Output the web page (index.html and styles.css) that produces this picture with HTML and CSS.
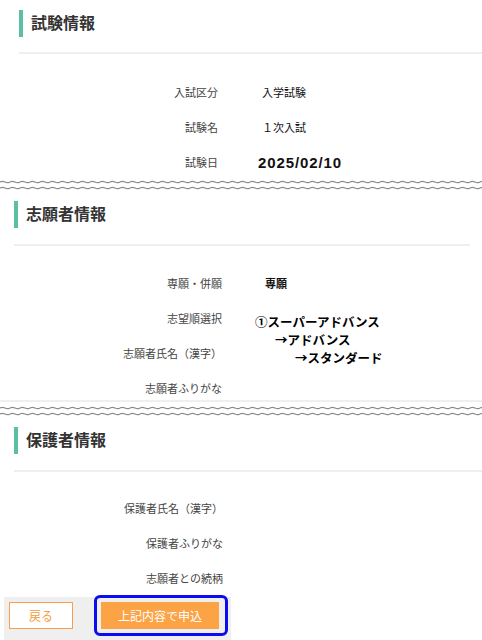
FILE: index.html
```html
<!DOCTYPE html>
<html lang="ja">
<head>
<meta charset="utf-8">
<title>申込内容確認</title>
<link rel="stylesheet" href="styles.css">
</head>
<body>
<main class="page">
  <section class="sec sec-exam">
    <h2 class="sec-head">試験情報</h2>
    <div class="sec-rule"></div>
    <dl class="rows">
      <div class="row"><dt class="lbl">入試区分</dt><dd class="val">入学試験</dd></div>
      <div class="row"><dt class="lbl">試験名</dt><dd class="val">１次入試</dd></div>
      <div class="row"><dt class="lbl">試験日</dt><dd class="val val-date">2025/02/10</dd></div>
    </dl>
  </section>

  <div class="wave"><svg class="wave-svg" width="100%" height="12"><defs><pattern id="w1" width="10" height="12" patternUnits="userSpaceOnUse"><path d="M0 2 Q2.5 0.6 5 2 T10 2 M0 8 Q2.5 6.6 5 8 T10 8" fill="none" stroke="#8c8c8c" stroke-width="1.2"/></pattern></defs><rect width="100%" height="12" fill="url(#w1)"/></svg></div>

  <section class="sec sec-applicant">
    <h2 class="sec-head">志願者情報</h2>
    <div class="sec-rule sec-rule-short"></div>
    <dl class="rows">
      <div class="row"><dt class="lbl">専願・併願</dt><dd class="val val-bold">専願</dd></div>
      <div class="row"><dt class="lbl">志望順選択</dt><dd class="val val-multi"><span class="ml-line">①スーパーアドバンス</span><span class="ml-line ml-2">→アドバンス</span><span class="ml-line ml-3">→スタンダード</span></dd></div>
      <div class="row"><dt class="lbl">志願者氏名（漢字）</dt><dd class="val"></dd></div>
      <div class="row row-cut"><dt class="lbl">志願者ふりがな</dt><dd class="val"></dd></div>
    </dl>
  </section>
  <div class="cut-line"></div>

  <div class="wave wave-2"><svg class="wave-svg" width="100%" height="12"><defs><pattern id="w2" width="10" height="12" patternUnits="userSpaceOnUse"><path d="M0 2 Q2.5 0.6 5 2 T10 2 M0 8 Q2.5 6.6 5 8 T10 8" fill="none" stroke="#8c8c8c" stroke-width="1.2"/></pattern></defs><rect width="100%" height="12" fill="url(#w2)"/></svg></div>

  <section class="sec sec-guardian">
    <h2 class="sec-head">保護者情報</h2>
    <div class="sec-rule"></div>
    <dl class="rows rows-guardian">
      <div class="row"><dt class="lbl">保護者氏名（漢字）</dt><dd class="val"></dd></div>
      <div class="row"><dt class="lbl">保護者ふりがな</dt><dd class="val"></dd></div>
      <div class="row"><dt class="lbl">志願者との続柄</dt><dd class="val"></dd></div>
    </dl>
  </section>

  <footer class="actions">
    <button class="btn btn-back" type="button">戻る</button>
    <span class="focus-ring"><button class="btn btn-submit" type="button">上記内容で申込</button></span>
  </footer>
</main>
</body>
</html>
```

FILE: styles.css
```css
html, body {
  margin: 0;
  padding: 0;
  background: #ffffff;
}

body {
  font-family: "Noto Sans CJK JP", "Noto Sans", sans-serif;
  color: #333333;
  width: 482px;
  height: 640px;
  overflow: hidden;
}

.page {
  display: flex;
  flex-direction: column;
}

.sec-head {
  margin: 0;
  height: 27px;
  border-left: 4px solid #5bbfa4;
  padding-left: 8px;
  font-size: 16px;
  font-weight: bold;
  line-height: 25px;
  color: #333333;
}

.sec-exam {
  padding-top: 10px;
  padding-left: 19px;
}

.sec-applicant {
  padding-top: 9px;
  padding-left: 14px;
}

.sec-guardian {
  padding-top: 9px;
  padding-left: 14px;
}

.sec-rule {
  height: 2px;
  background: #efefef;
  margin-top: 15px;
}

.sec-applicant .sec-rule,
.sec-guardian .sec-rule {
  margin-top: 16px;
}

.sec-rule-short {
  margin-right: 12px;
}

.rows {
  margin: 21px 0 0;
  padding: 0;
}

.sec-applicant .rows {
  margin-top: 20px;
}

.rows-guardian {
  margin-top: 19px;
}

.row {
  display: flex;
  height: 35px;
  box-sizing: border-box;
  padding-top: 9px;
  line-height: 17px;
}

.row-cut {
  height: 29px;
}

.lbl {
  width: 199px;
  flex: none;
  text-align: right;
  font-size: 11px;
  color: #444444;
}

.sec-applicant .lbl {
  width: 208px;
}

.sec-guardian .lbl {
  width: 209px;
}

.val {
  margin: 0 0 0 44px;
  font-size: 11px;
  color: #111111;
}

.sec-applicant .val {
  margin-left: 43px;
}

.val-date {
  margin-left: 40px;
  font-family: "Liberation Sans", Arial, sans-serif;
  font-size: 15px;
  font-weight: bold;
  letter-spacing: 0.9px;
  color: #111111;
  line-height: 17px;
}

.val-bold {
  font-weight: bold;
}

.sec-applicant .val-multi {
  margin-left: 33px;
  margin-top: 3px;
  display: flex;
  flex-direction: column;
  font-size: 12.5px;
  font-weight: bold;
  line-height: 18px;
  color: #000000;
  white-space: nowrap;
}

.ml-2 {
  padding-left: 20px;
}

.ml-3 {
  padding-left: 40px;
}

.cut-line {
  height: 2px;
  background: #efefef;
}

.wave {
  height: 12px;
  line-height: 0;
}

.wave-2 {
  margin-top: 4px;
}

.wave-svg {
  display: block;
}

.actions {
  margin-top: 1px;
  margin-left: 4px;
  width: 227px;
  height: 43px;
  box-sizing: border-box;
  background: #efefef;
  display: flex;
  align-items: flex-start;
  padding: 5px 0 0 5px;
}

.btn {
  font-family: "Noto Sans CJK JP", "Noto Sans", sans-serif;
  font-size: 12px;
  height: 27px;
  box-sizing: border-box;
  padding: 0;
  margin: 0;
  cursor: pointer;
}

.btn-back {
  width: 64px;
  border: 1px solid #f7a04b;
  background: #ffffff;
  color: #f59b3d;
}

.focus-ring {
  display: flex;
  margin-left: 21px;
  margin-top: -7px;
  border: 3px solid #0c0cf2;
  border-radius: 6px;
  padding: 4px 6px 4px 4px;
}

.btn-submit {
  width: 118px;
  border: 0;
  background: #fba345;
  color: #ffffff;
}
```
